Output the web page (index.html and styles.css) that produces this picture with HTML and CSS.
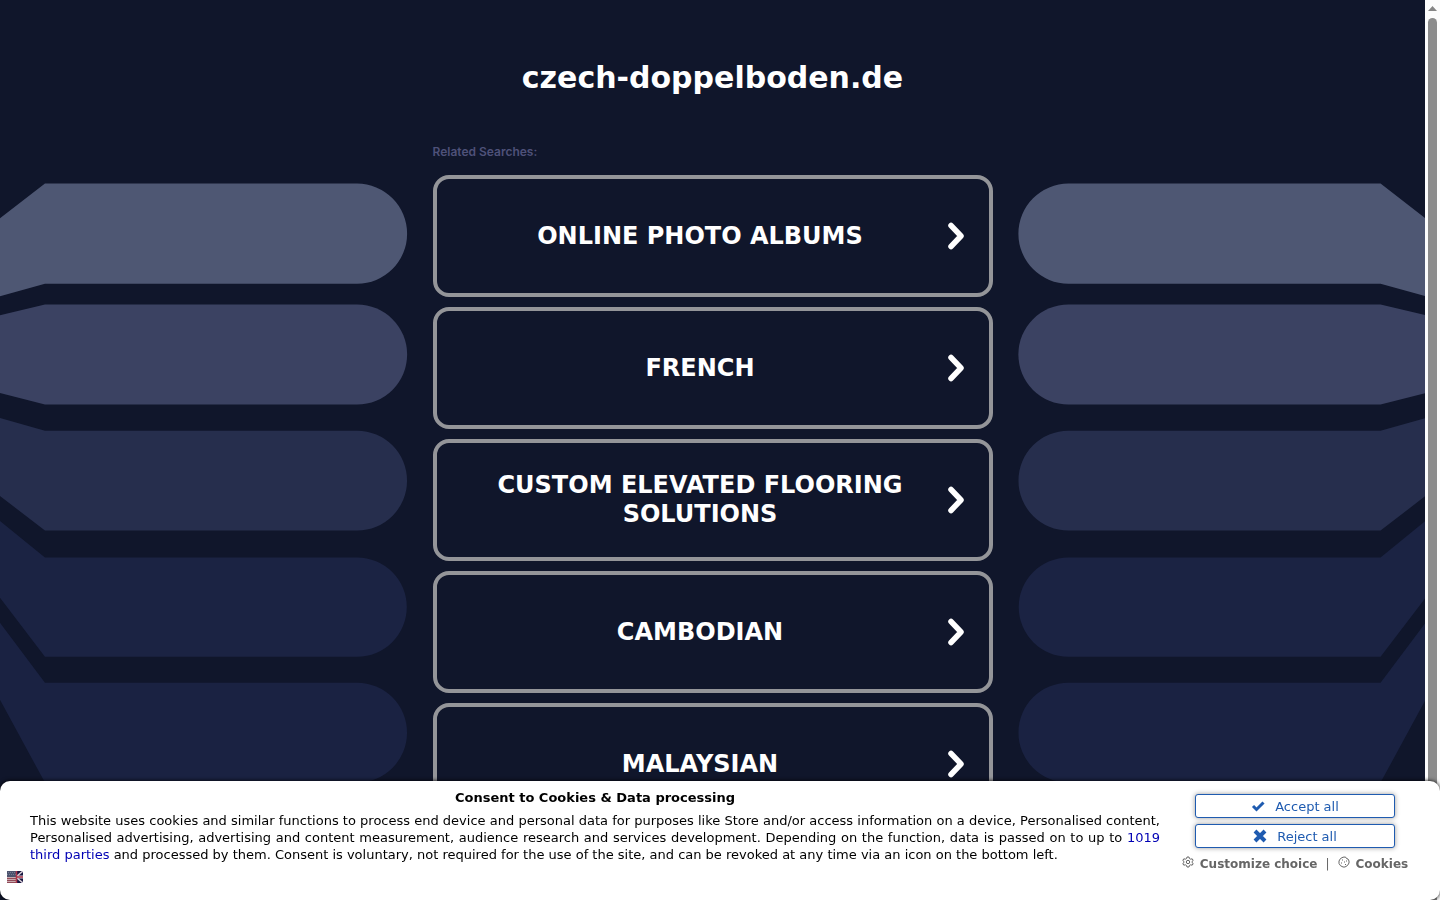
FILE: index.html
```html
<!DOCTYPE html>
<html lang="en">
<head>
    <meta charset="utf-8">
    <meta name="viewport" content="width=device-width, initial-scale=1">
    <title>czech-doppelboden.de</title>
    <link rel="stylesheet" href="styles.css">
</head>
<body>
<svg class="defs" aria-hidden="true">
    <symbol id="bands" viewBox="0 0 433 900">
        <path fill="#4e5773" d="M0 218 45 183.300H357.500a50 50 0 0 1 0 100.200H45L0 296z"/>
        <path fill="#3b4262" d="M0 315 45 304.300H357.500a50 50 0 0 1 0 100.200H45L0 393z"/>
        <path fill="#262e4d" d="M0 418 45 430.700H357.500a50 50 0 0 1 0 100H45L0 496z"/>
        <path fill="#1b2343" d="M0 521 45 557.500H357.500a49.750 49.750 0 0 1 0 99.500H45L0 598z"/>
        <path fill="#1a2242" d="M0 623 45 683H357.500a50 50 0 0 1 0 100H45L0 700z"/>
    </symbol>
    <symbol id="chevron" viewBox="0 0 18 28">
        <path d="M4 3.500 14 14 4 24.500" fill="none" stroke="#fff" stroke-width="5.500" stroke-linecap="round" stroke-linejoin="round"/>
    </symbol>
</svg>

<div class="viewport">
    <div class="page">
        <svg class="bands" preserveAspectRatio="xMaxYMin"><use href="#bands"/></svg>
        <main class="content">
            <h1 class="domain">czech-doppelboden.de</h1>
            <p class="related">Related Searches:</p>
            <nav class="searches">
                <a class="search" href="#"><span class="search-text">ONLINE PHOTO ALBUMS</span><svg class="chevron"><use href="#chevron"/></svg></a>
                <a class="search" href="#"><span class="search-text">FRENCH</span><svg class="chevron"><use href="#chevron"/></svg></a>
                <a class="search" href="#"><span class="search-text">CUSTOM ELEVATED FLOORING SOLUTIONS</span><svg class="chevron"><use href="#chevron"/></svg></a>
                <a class="search" href="#"><span class="search-text">CAMBODIAN</span><svg class="chevron"><use href="#chevron"/></svg></a>
                <a class="search" href="#"><span class="search-text">MALAYSIAN</span><svg class="chevron"><use href="#chevron"/></svg></a>
            </nav>
        </main>
        <svg class="bands bands-right"><use href="#bands"/></svg>
    </div>
    <div class="scrollbar" aria-hidden="true">
        <svg class="scroll-arrow" viewBox="0 0 9 5"><path fill="#858585" d="M4.500 0 9 5H0z"/></svg>
        <div class="scroll-thumb"></div>
    </div>
</div>

<section class="consent" aria-labelledby="consent-title">
    <div class="consent-main">
        <h2 class="consent-title" id="consent-title">Consent to Cookies &amp; Data processing</h2>
        <p class="consent-text">This website uses cookies and similar functions to process end device and personal data for purposes like Store and/or access information on a device, Personalised content, Personalised advertising, advertising and content measurement, audience research and services development. Depending on the function, data is passed on to up to <a href="#">1019 third parties</a> and processed by them. Consent is voluntary, not required for the use of the site, and can be revoked at any time via an icon on the bottom left.</p>
        <button class="language" type="button" aria-label="English">
            <svg viewBox="0 0 16 12">
                <path fill="#c8a9ae" d="M0 0h9v12H0z"/>
                <path stroke="#924b59" d="M0 7.500h9M0 9.500h9M0 11.500h9"/>
                <path fill="#4b536e" d="M0 0h9v6H0z"/>
                <path stroke="#747b90" stroke-dasharray="1 1" d="M1 1.500h8M0 3.500h9"/>
                <path fill="#15153f" d="M9 0h7v12H9z"/>
                <path stroke="#d9ced8" stroke-width="1.500" d="M10 5l6-5M10 7l6 5"/>
                <path stroke="#ddd1d8" stroke-width="3" d="M9 6h7"/>
                <path stroke="#ac3549" stroke-width="1.500" d="M9 6h7M9.500 0v12"/>
            </svg>
        </button>
    </div>
    <div class="consent-actions">
        <button class="choice" type="button">
            <svg width="14" height="12" viewBox="0 0 14 12"><path d="M2 6 5.500 9.500 12.500 2.500" fill="none" stroke="#1f5bb0" stroke-width="3"/></svg>
            Accept all
        </button>
        <button class="choice" type="button">
            <svg width="14" height="14" viewBox="0 0 14 14"><path d="M2 2 12 12M12 2 2 12" fill="none" stroke="#1f5bb0" stroke-width="4"/></svg>
            Reject all
        </button>
        <div class="consent-links">
            <a href="#"><svg width="12" height="12" viewBox="0 0 12 12" fill="none" stroke="#666"><path d="M5 1h2l.4 1.500 1.300.7 1.500-.4 1 1.700L10 5.500v1l1.200 1-1 1.700-1.500-.4-1.300.7L7 11H5l-.4-1.500-1.300-.7-1.500.4-1-1.700L2 6.500v-1l-1.200-1 1-1.700 1.500.4 1.300-.7z"/><circle cx="6" cy="6" r="1.700"/></svg>Customize choice</a>
            <span class="divider">|</span>
            <a href="#"><svg width="12" height="12" viewBox="0 0 12 12" fill="none" stroke="#666"><path d="M5 1.200 7.500 1 8.500 2.500 10 3 11 5v2L9.500 9.500 7 11H5L2.500 9.700 1 7.500V5L2.500 2.500z"/><path d="M4 4h1M3 7h1M6 6h1M7 8.500h1M8 5h1"/></svg>Cookies</a>
        </div>
    </div>
</section>
</body>
</html>
```
FILE: styles.css
```css
* {
    box-sizing: border-box;
}
body {
    margin: 0;
    background: #10162b;
    color: #fff;
    font-family: "DejaVu Sans", Verdana, sans-serif;
}
.defs {
    display: none;
}
.viewport {
    display: grid;
    grid-template-columns: 1fr 15px;
    height: 100vh;
    overflow: hidden;
}
.page {
    display: grid;
    grid-template-columns: 1fr minmax(0, 560px) 1fr;
    align-items: start;
    overflow: hidden;
}
.bands {
    width: 100%;
    height: 900px;
}
.bands-right {
    transform: scaleX(-1);
}

/* search column */
.domain {
    margin: 60px 0 0;
    font-size: 30px;
    line-height: 35px;
    text-align: center;
}
.related {
    margin: 48px 0 15px;
    color: #4e5179;
    font: 600 12px/17px Inter, sans-serif;
}
.searches {
    display: grid;
    gap: 10px;
}
.search {
    display: flex;
    align-items: center;
    gap: 25px;
    height: 122px;
    padding: 0 24px 0 42px;
    border: 4px solid #949599;
    border-radius: 16px;
    color: #fff;
    font-size: 24px;
    font-weight: bold;
    line-height: 29px;
    text-align: center;
    text-decoration: none;
}
.search-text {
    flex: 1;
}
.chevron {
    width: 18px;
    height: 28px;
}

/* scroll track */
.scrollbar {
    display: flex;
    flex-direction: column;
    align-items: center;
    gap: 7px;
    padding-top: 6px;
    background: #fcfcfc;
}
.scroll-arrow {
    width: 9px;
    height: 5px;
}
.scroll-thumb {
    flex: 1;
    width: 9px;
    border-radius: 5px 5px 0 0;
    background: #8b8b8b;
}

/* cookie banner */
.consent {
    position: fixed;
    right: 0;
    bottom: 0;
    left: 0;
    display: flex;
    min-height: 119px;
    border-radius: 10px;
    background: #fff;
    box-shadow: 0 0 4px #000;
    color: #000;
    font-size: 13px;
    line-height: 17px;
}
.consent-main {
    flex: 1;
    padding: 8px 20px 0 30px;
}
.consent-title {
    margin: 0 0 6px;
    font-size: 13px;
    text-align: center;
}
.consent-text {
    margin: 0;
    text-align: justify;
}
.consent-text a {
    color: #0000b4;
    text-decoration: none;
}
.language {
    display: block;
    width: 16px;
    height: 12px;
    margin: 8px 0 0 -23px;
    padding: 0;
    border: 0;
    background: none;
}
.language svg {
    display: block;
}
.consent-actions {
    display: flex;
    flex-direction: column;
    align-items: center;
    gap: 6px;
    width: 260px;
    padding: 13px 30px 0 0;
}
.choice {
    display: flex;
    align-items: center;
    justify-content: center;
    gap: 10px;
    width: 200px;
    height: 24px;
    padding: 0;
    border: 1px solid #1f5bb0;
    border-radius: 3px;
    background: #fff;
    box-shadow: 0 0 5px #999;
    color: #1f5bb0;
    font: 13px/17px "DejaVu Sans", Verdana, sans-serif;
}
.consent-links {
    display: flex;
    gap: 8px;
    padding-top: 2px;
    color: #666;
    font-size: 12px;
    white-space: nowrap;
}
.consent-links a {
    display: flex;
    gap: 6px;
    color: #666;
    font-weight: bold;
    text-decoration: none;
}
```
